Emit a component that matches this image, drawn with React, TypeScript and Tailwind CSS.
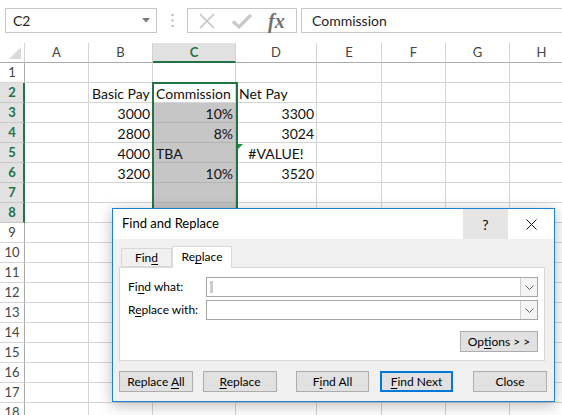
import React from "react";

type Align = "l" | "r" | "c";

const COLS = ["A", "B", "C", "D", "E", "F", "G", "H"];
const ROWS = Array.from({ length: 18 }, (_, i) => i + 1);

const cells: Record<string, { text: string; align: Align }> = {
  B2: { text: "Basic Pay", align: "l" },
  C2: { text: "Commission", align: "l" },
  D2: { text: "Net Pay", align: "l" },
  B3: { text: "3000", align: "r" },
  C3: { text: "10%", align: "r" },
  D3: { text: "3300", align: "r" },
  B4: { text: "2800", align: "r" },
  C4: { text: "8%", align: "r" },
  D4: { text: "3024", align: "r" },
  B5: { text: "4000", align: "r" },
  C5: { text: "TBA", align: "l" },
  D5: { text: "#VALUE!", align: "c" },
  B6: { text: "3200", align: "r" },
  C6: { text: "10%", align: "r" },
  D6: { text: "3520", align: "r" },
};

const alignClass: Record<Align, string> = {
  l: "justify-start pl-[3px]",
  r: "justify-end pr-[2px]",
  c: "justify-center",
};

function Key({ children }: { children: React.ReactNode }) {
  return <span className="underline underline-offset-[2px]">{children}</span>;
}

function FormulaBar() {
  return (
    <div className="flex h-[43px] items-start pl-[5px] pt-[8px]">
      <div className="flex h-[25px] w-[152px] shrink-0 items-center justify-between border border-[#c6c6c6] pl-[7px] pr-[6px] text-[14px] text-[#222]">
        <span>C2</span>
        <svg width="8" height="5" viewBox="0 0 8 5">
          <path d="M0 0 H8 L4 4.5 Z" fill="#7a7a7a" />
        </svg>
      </div>
      <div className="flex h-[25px] w-[30px] shrink-0 items-center justify-center">
        <svg width="3" height="13" viewBox="0 0 3 13">
          <rect x="0.5" y="0" width="2" height="2" fill="#b4b4b4" />
          <rect x="0.5" y="5.5" width="2" height="2" fill="#b4b4b4" />
          <rect x="0.5" y="11" width="2" height="2" fill="#b4b4b4" />
        </svg>
      </div>
      <div className="flex h-[25px] w-[110px] shrink-0 items-center gap-[16px] border border-[#c6c6c6] pl-[10px]">
        <svg width="18" height="18" viewBox="0 0 18 18">
          <path d="M2 2 L16 16 M16 2 L2 16" stroke="#c4c4c4" strokeWidth="1.6" />
        </svg>
        <svg width="20" height="16" viewBox="0 0 20 16">
          <path d="M1 8.5 L7 14 L19 2" stroke="#c8c8c8" strokeWidth="3.2" fill="none" />
        </svg>
        <span className="font-['Liberation_Serif',serif] text-[20px] font-bold italic leading-none text-[#707070]">
          fx
        </span>
      </div>
      <div className="ml-[4px] flex h-[25px] flex-1 items-center border-y border-l border-[#c6c6c6] pl-[10px] text-[14px] text-[#222]">
        Commission
      </div>
    </div>
  );
}

function Sheet() {
  return (
    <div className="grid auto-rows-[20px] grid-cols-[25px_64px_64px_83px_81px_65px_64px_64px_64px]">
      <div className="relative border-b border-r border-[#ababab] border-r-[#d4d4d4]">
        <svg className="absolute bottom-[3px] right-[3px]" width="12" height="12" viewBox="0 0 12 12">
          <path d="M12 0 V12 H0 Z" fill="#dadada" />
        </svg>
      </div>
      {COLS.map((c) => (
        <div
          key={c}
          className={
            c === "C"
              ? "flex items-center justify-center border-b-2 border-r border-b-[#217346] border-r-[#d4d4d4] bg-[#e1e1e1] pt-[1px] text-[13px] font-bold text-[#217346]"
              : "flex items-center justify-center border-b border-r border-b-[#ababab] border-r-[#d4d4d4] text-[13px] text-[#444]"
          }
        >
          {c}
        </div>
      ))}
      {ROWS.map((r) => {
        const sel = r >= 2 && r <= 8;
        return (
          <React.Fragment key={r}>
            <div
              className={
                sel
                  ? "flex items-center justify-center border-b border-r-2 border-b-[#c8c8c8] border-r-[#217346] bg-[#e1e1e1] pl-[1px] text-[13px] font-bold text-[#217346]"
                  : "flex items-center justify-center border-b border-r border-b-[#d4d4d4] border-r-[#ababab] text-[13px] text-[#444]"
              }
            >
              {r}
            </div>
            {COLS.map((c) => {
              const key = `${c}${r}`;
              const cell = cells[key];
              const gray = c === "C" && r >= 3 && r <= 8;
              return (
                <div
                  key={key}
                  className={`relative flex items-center whitespace-nowrap border-b border-r pt-[2px] text-[14px] text-[#111] ${
                    gray ? "border-[#b4b4b4] bg-[#c6c6c6]" : "border-[#d4d4d4]"
                  } ${cell ? alignClass[cell.align] : ""}`}
                >
                  {key === "D5" && (
                    <svg className="absolute left-[2px] top-[1px]" width="5" height="5" viewBox="0 0 5 5">
                      <path d="M0 0 H5 L0 5 Z" fill="#1e8a3c" />
                    </svg>
                  )}
                  {cell?.text}
                </div>
              );
            })}
          </React.Fragment>
        );
      })}
    </div>
  );
}

function Button({
  children,
  className,
  primary,
}: {
  children: React.ReactNode;
  className: string;
  primary?: boolean;
}) {
  return (
    <div
      className={`flex h-[21px] shrink-0 items-center justify-center bg-[#e1e1e1] ${
        primary ? "border-2 border-[#0078d7]" : "border border-[#adadad]"
      } ${className}`}
    >
      <span className="whitespace-pre">{children}</span>
    </div>
  );
}

function ComboInput({ caret }: { caret?: boolean }) {
  return (
    <div className="flex h-[20px] flex-1 border border-[#a6a6a6] bg-white">
      {caret && <div className="ml-[3px] mt-[3px] h-[12px] w-[3px] bg-[#cccccc]" />}
      <div className="ml-auto flex h-full w-[17px] items-center justify-center border-l border-[#cfcfcf] bg-[#f4f4f4]">
        <svg width="9" height="5" viewBox="0 0 9 5">
          <path d="M0.5 0.5 L4.5 4.5 L8.5 0.5" stroke="#606060" fill="none" />
        </svg>
      </div>
    </div>
  );
}

function FindReplaceDialog() {
  return (
    <div className="absolute left-[112px] top-[208px] flex h-[194px] w-[443px] flex-col border border-[#1883d7] bg-[#f0f0f0] text-[12px] text-black shadow-[0_3px_14px_rgba(0,0,0,0.28)]">
      <div className="flex h-[30px] shrink-0 items-center bg-white">
        <span className="flex-1 pl-[9px] text-[13px]">Find and Replace</span>
        <div className="flex h-full w-[45px] items-center justify-center bg-[#e5e5e5] text-[14px]">?</div>
        <div className="flex h-full w-[46px] items-center justify-center">
          <svg width="11" height="11" viewBox="0 0 11 11">
            <path d="M0.5 0.5 L10.5 10.5 M10.5 0.5 L0.5 10.5" stroke="#111" strokeWidth="1" />
          </svg>
        </div>
      </div>
      <div className="pl-[6px] pr-[9px] pt-[7px]">
        <div className="relative z-10 flex h-[21px] items-end pl-[2px]">
          <div className="flex h-[19px] w-[51px] items-center justify-center border border-[#d9d9d9] bg-[#f0f0f0]">
            <span>
              Fin<Key>d</Key>
            </span>
          </div>
          <div className="mb-[-1px] flex h-[22px] w-[60px] items-center justify-center border border-b-0 border-[#d9d9d9] bg-white pb-[1px]">
            <span>
              Re<Key>p</Key>lace
            </span>
          </div>
        </div>
        <div className="flex h-[94px] flex-col border border-[#d9d9d9] bg-white pl-[8px] pr-[6px] pt-[9px]">
          <div className="flex h-[20px] items-center">
            <span className="w-[78px]">
              Fi<Key>n</Key>d what:
            </span>
            <ComboInput caret />
          </div>
          <div className="mt-[3px] flex h-[20px] items-center">
            <span className="w-[78px]">
              R<Key>e</Key>place with:
            </span>
            <ComboInput />
          </div>
          <Button className="mt-[11px] w-[78px] self-end">
            Op<Key>t</Key>ions &gt; &gt;
          </Button>
        </div>
        <div className="mt-[10px] flex">
          <Button className="w-[74px]">
            Replace <Key>A</Key>ll
          </Button>
          <Button className="ml-[10px] w-[74px]">
            <Key>R</Key>eplace
          </Button>
          <Button className="ml-[19px] w-[73px]">
            F<Key>i</Key>nd All
          </Button>
          <Button className="ml-[11px] w-[73px]" primary>
            <Key>F</Key>ind Next
          </Button>
          <Button className="ml-[20px] w-[74px]">Close</Button>
        </div>
      </div>
    </div>
  );
}

export default function App() {
  return (
    <div className="relative h-[415px] w-[562px] overflow-hidden bg-white font-['Lato',sans-serif]">
      <FormulaBar />
      <Sheet />
      <div className="pointer-events-none absolute left-[152px] top-[82px] h-[143px] w-[86px] border-2 border-[#217346]" />
      <FindReplaceDialog />
    </div>
  );
}
